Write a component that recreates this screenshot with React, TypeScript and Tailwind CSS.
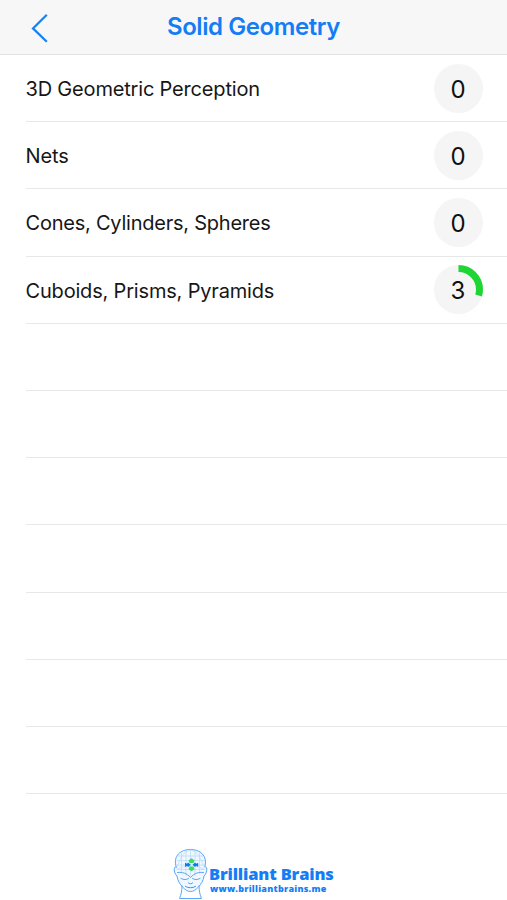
type Topic = { name: string; score: number; progress: number; tracking: string };

const topics: Topic[] = [
  { name: "3D Geometric Perception", score: 0, progress: 0, tracking: "tracking-[-0.18px]" },
  { name: "Nets", score: 0, progress: 0, tracking: "tracking-[-0.1px]" },
  { name: "Cones, Cylinders, Spheres", score: 0, progress: 0, tracking: "tracking-[-0.23px]" },
  { name: "Cuboids, Prisms, Pyramids", score: 3, progress: 0.295, tracking: "tracking-[-0.18px]" },
];

const emptyRows = Array.from({ length: 7 }, (_, i) => i);

function ScoreBadge({ score, progress }: { score: number; progress: number }) {
  const length = 2 * Math.PI * 21;
  return (
    <div className="relative flex h-[49px] w-[49px] items-center justify-center rounded-full bg-[#f5f5f5]">
      {progress > 0 && (
        <svg className="absolute inset-0 -rotate-90" width="49" height="49" viewBox="0 0 49 49" fill="none">
          <circle cx="24.5" cy="24.5" r="21" stroke="#1fd534" strokeWidth="7" strokeDasharray={`${length * progress} ${length}`} />
        </svg>
      )}
      <span className="relative pt-[3px] text-[24px] leading-none text-[#111]">{score}</span>
    </div>
  );
}

function HeadLogo() {
  return (
    <svg className="shrink-0" width="36" height="52" viewBox="0 0 36 52" fill="none" stroke="#5aa6f7" strokeWidth="1" strokeLinecap="round" strokeLinejoin="round">
      <path d="M3.200 19C-.5 7.500 8 1.500 17.500 1.500S35 7.500 31.800 19c3-1.500 2.500 6.500-.8 9-.7 5-3 8-5.500 11-3 3-5 4.500-8 4.500s-5-1.500-8-4.500C7 36 4.700 33 4 28 .7 25.500.2 17.500 3.200 19Z" fill="#f0f7ff" />
      <path d="M9 38c0 5-1 9-2.500 12.500h22C27 47 26 43 26 38" />
      <g stroke="#b0d5fb" strokeWidth="0.6">
        <path d="M8.500 5v20M13 2.500v25M17.500 2v26M22 2.500v25M26.500 5v20M5 8h25M3.500 12.500h28M3.500 17h28M4 21.500h27" />
        <path d="M4.500 18C8 9 10 4 17.500 2c7.500 2 9.500 7 13 16M4 21c9-4 18-4 27 0" />
      </g>
      <path d="M4.500 24.500c5-.5 9 .5 13 5 4-4.500 8-5.500 13-5M8 30.500c3 1.500 5 1.500 7.500 0M19.500 30.500c2.500 1.500 4.500 1.500 7.500 0" />
      <path d="M15.500 35c1.200 1 2.800 1 4 0M12.500 38.500c3 1.700 7 1.700 10 0" stroke="#3b91ef" />
      <g stroke="none">
        <path d="M18.500 10.300l3 2-1 2.700h-4l-1-2.700ZM18.500 23.200l3-2-1-2.700h-4l-1 2.700Z" fill="#3edb62" />
        <path d="M12 14.700v4.200l2-1.100 1.100 1.300 2.600-2.300-2.600-2.300-1.100 1.300ZM25.200 14.700v4.200l-2-1.100-1.100 1.300-2.600-2.300 2.600-2.300 1.100 1.300Z" fill="#087de8" />
      </g>
    </svg>
  );
}

export default function App() {
  return (
    <main className="flex h-[900px] w-full flex-col overflow-hidden bg-white font-['Inter','Liberation_Sans',sans-serif]">
      <header className="grid h-[55px] shrink-0 grid-cols-[80px_1fr_80px] items-center border-b border-[#e2e2e2] bg-[#f7f7f7]">
        <button aria-label="Back" className="ml-[30px] mt-px flex w-5">
          <svg width="20" height="30" viewBox="0 0 20 30" fill="none" stroke="#1481f6" strokeWidth="2.200">
            <path d="M16.800 1.800 3 15.400l13.800 13.400" />
          </svg>
        </button>
        <h1 className="whitespace-nowrap text-center text-[24px] font-semibold tracking-[-0.42px] text-[#147df5]">Solid Geometry</h1>
      </header>
      <ul className="shrink-0 pl-[26px]">
        {topics.map((topic) => (
          <li key={topic.name} className="flex h-[67.2px] items-center justify-between border-b border-[#e8e8e8] pr-[24.500px]">
            <span className={`-ml-[0.5px] whitespace-nowrap pt-[2px] text-[20px] text-[#161616] ${topic.tracking}`}>{topic.name}</span>
            <ScoreBadge score={topic.score} progress={topic.progress} />
          </li>
        ))}
        {emptyRows.map((row) => (
          <li key={row} className="h-[67.2px] border-b border-[#e8e8e8]" />
        ))}
      </ul>
      <footer className="flex flex-1 items-end pl-[173px]">
        <HeadLogo />
        <div className="mb-[5px] flex flex-col font-['Open_Sans',sans-serif] font-extrabold text-[#147df5]">
          <span className="whitespace-nowrap text-[16.500px] leading-[19px] tracking-[-0.18px]">Brilliant Brains</span>
          <span className="ml-[1px] whitespace-nowrap text-[9px] leading-[12px] tracking-[0.25px]">www.brilliantbrains.me</span>
        </div>
      </footer>
    </main>
  );
}
